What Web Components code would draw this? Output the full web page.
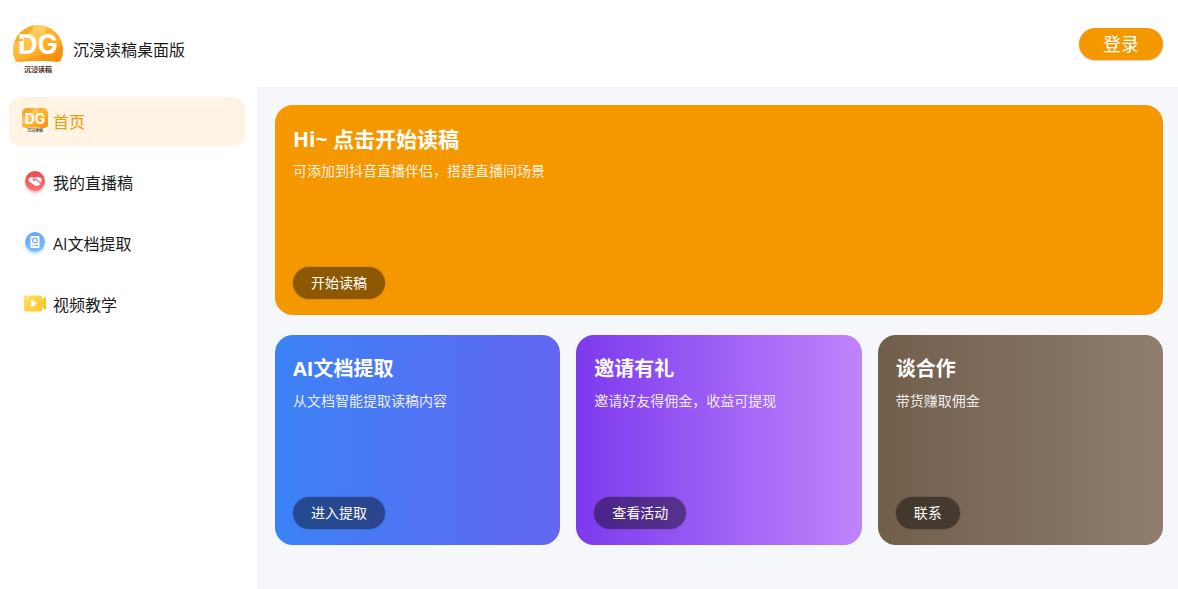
<!DOCTYPE html>
<html lang="zh-CN">
<head>
<meta charset="utf-8">
<meta name="viewport" content="width=device-width, initial-scale=1">
<title>沉浸读稿桌面版</title>
<style>
  body { margin: 0; background: #fff; color: #1a1a1a; font: 16px/24px "Open Sans", "Noto Sans CJK SC", sans-serif; }
</style>
</head>
<body>
<reader-app></reader-app>
<script>
const define = (name, html) => {
  const template = document.createElement('template');
  template.innerHTML = html;
  customElements.define(name, class extends HTMLElement {
    constructor() {
      super();
      this.attachShadow({ mode: 'open' }).append(template.content.cloneNode(true));
    }
  });
};

define('brand-logo', `
  <style>
    :host { display: block; width: 52px; height: 52px; }
    svg { display: block; width: 100%; height: 100%; }
    .mark { font: 700 27px Inter, sans-serif; }
    .name { font: 700 7px "Noto Sans CJK SC", sans-serif; }
  </style>
  <svg viewBox="0 0 52 52" role="img" aria-label="沉浸读稿">
    <defs>
      <linearGradient id="g" x1="0" y1="0" x2="1" y2="1">
        <stop offset="0" stop-color="#f9a01c"/><stop offset=".5" stop-color="#ffb62e"/><stop offset="1" stop-color="#fb8905"/>
      </linearGradient>
      <linearGradient id="s" x2="0" y2="1"><stop stop-color="#ffd879"/><stop offset="1" stop-color="#ffbb3a"/></linearGradient>
      <clipPath id="c"><circle cx="26" cy="26" r="25"/></clipPath>
    </defs>
    <g clip-path="url(#c)">
      <path fill="url(#g)" d="M0 0H52V34Q50 38 44 38Q26 36 8 38Q2 38 0 34Z"/>
      <path fill="url(#s)" opacity=".8" d="M36 0Q32 18 16 27Q8 31 0 32V20Q17 16 23 0Z"/>
      <path fill="#f8890a" opacity=".4" d="M0 36Q30 35 52 20V38H0Z"/>
      <path fill="#fff" d="M0 34Q2 38 8 38Q26 36 44 38Q50 38 52 34V52H0Z"/>
    </g>
    <text class="mark" x="26" y="30" text-anchor="middle" fill="#fff">DG</text>
    <path stroke="#ffb02c" stroke-width="2" d="M6 16h5"/>
    <path d="M3 38A25 25 0 0 0 49 38" fill="none" stroke="#f2b779" stroke-dasharray="1 2"/>
    <text class="name" x="26" y="48" text-anchor="middle" fill="#4e321d">沉浸读稿</text>
  </svg>`);

define('app-header', `
  <style>
    :host { display: flex; align-items: center; justify-content: space-between; height: 87px; padding: 0 15px 0 12px; box-sizing: border-box; }
    .brand { display: flex; align-items: center; gap: 9px; padding-top: 12px; }
    button { height: 32px; padding: 0 24px; border: 0; border-radius: 16px; background: #f59800; color: #fff; font: 18px/32px "Open Sans", "Noto Sans CJK SC", sans-serif; box-shadow: 0 1px 2px #0003; cursor: pointer; }
  </style>
  <div class="brand"><brand-logo></brand-logo><span><slot></slot></span></div>
  <button type="button">登录</button>`);

define('nav-item', `
  <style>
    :host { display: block; }
    a { display: flex; align-items: center; gap: 5px; height: 49px; padding: 0 13px; border-radius: 12px; color: inherit; text-decoration: none; }
    :host([active]) a { background: #fff3e4; color: #f59800; }
    ::slotted(svg) { width: 26px; height: 26px; flex: none; margin-bottom: 2px; }
  </style>
  <a href="#"><slot name="icon"></slot><span><slot></slot></span></a>`);

define('side-nav', `
  <style>
    :host { display: block; padding: 10px 12px 0 9px; }
    nav { display: grid; gap: 12px; }
    .mark { font: 700 14px Inter, sans-serif; }
    .name { font: 700 4px "Noto Sans CJK SC", sans-serif; }
  </style>
  <nav>
    <nav-item active>
      <svg slot="icon" viewBox="0 0 26 26" aria-hidden="true">
        <defs>
          <linearGradient id="h" x1="0" x2="1" y2="1"><stop stop-color="#f5a02b"/><stop offset=".5" stop-color="#ffb733"/><stop offset="1" stop-color="#fb8d0b"/></linearGradient>
          <clipPath id="r"><rect width="26" height="26" rx="5"/></clipPath>
        </defs>
        <g clip-path="url(#r)">
          <path fill="#fff" d="M0 0h26v26H0z"/>
          <path fill="url(#h)" d="M0 0h26v18Q25 20 22 20Q13 19 4 20Q1 20 0 18Z"/>
          <path fill="#ffd06a" opacity=".7" d="M17 0Q14 13 0 16V9Q10 8 12 0Z"/>
        </g>
        <text class="mark" x="13" y="16" fill="#fff" text-anchor="middle">DG</text>
        <text class="name" x="13" y="24" fill="#6b4a31" text-anchor="middle">沉浸读稿</text>
      </svg>首页
    </nav-item>
    <nav-item>
      <svg slot="icon" viewBox="0 0 26 26" aria-hidden="true">
        <defs><linearGradient id="red" x2="0" y2="1"><stop stop-color="#ef4650"/><stop offset="1" stop-color="#fa7470"/></linearGradient>
        <filter id="b" x="-30%" y="-30%" width="160%" height="160%"><feGaussianBlur stdDeviation="1.4"/></filter></defs>
        <circle cx="13" cy="15" r="9" fill="#f67678" opacity=".6" filter="url(#b)"/>
        <circle cx="13" cy="12" r="10" fill="url(#red)"/>
        <path fill="#fff" d="M6.500 9.500L9.500 8L12 8.500L10.500 11Q12 12.500 14 11L18.500 15L17 16.500L13.500 17L7 12.500Z"/>
        <path fill="#fff" d="M13 8.500L16.500 8L19.500 9.500V12.500L18.500 13.500L14.500 10L12 11Z"/>
        <path stroke="#ef5a60" stroke-width=".6" fill="none" d="M10.500 11Q12 13 14.200 10.500L18.500 14.200"/>
      </svg>我的直播稿
    </nav-item>
    <nav-item>
      <svg slot="icon" viewBox="0 0 26 26" aria-hidden="true">
        <defs><linearGradient id="blue" x2="0" y2="1"><stop stop-color="#65a9f7"/><stop offset="1" stop-color="#7cbdff"/></linearGradient>
        <filter id="b2" x="-30%" y="-30%" width="160%" height="160%"><feGaussianBlur stdDeviation="1.4"/></filter></defs>
        <circle cx="13" cy="15" r="9" fill="#85c2ff" opacity=".6" filter="url(#b2)"/>
        <circle cx="13" cy="12" r="10" fill="url(#blue)"/>
        <rect x="8.500" y="6" width="9" height="12" rx="1" fill="#fff"/>
        <circle cx="13" cy="10.500" r="2.300" fill="none" stroke="#70b0fa" stroke-width="1.200"/>
        <path d="M10 15.500h1M12.500 15.500h3.500" stroke="#70b0fa"/>
      </svg>AI文档提取
    </nav-item>
    <nav-item>
      <svg slot="icon" viewBox="0 0 26 26" aria-hidden="true">
        <defs><linearGradient id="yellow" x2="1" y2="1"><stop stop-color="#ffe45a"/><stop offset="1" stop-color="#ffc52e"/></linearGradient></defs>
        <path fill="#ffc833" d="M18 11L22 6.500Q24 5 24 7V18Q24 20 22 18L18 14Z"/>
        <rect x="2" y="4.500" width="18" height="16" rx="2" fill="url(#yellow)"/>
        <path fill="#fff" d="M9 9.500Q9 8.500 10 9L14.500 11.900Q15.300 12.500 14.500 13.100L10 16Q9 16.500 9 15.500Z"/>
        <path fill="none" stroke="#fff" d="M4 9V8Q4 6.500 5.500 6.500H7.500"/>
      </svg>视频教学
    </nav-item>
  </nav>`);

define('promo-card', `
  <style>
    :host { display: flex; flex-direction: column; align-items: flex-start; min-height: 210px; padding: 18px 18px 16px; box-sizing: border-box; border-radius: 18px; color: #fff; }
    h2 { margin: 0; font-size: var(--title-size, 20px); line-height: 32px; font-weight: 700; }
    p { margin: 6px 0 0; font-size: 14px; line-height: 20px; color: #ffffffe6; }
    button { height: 32px; margin-top: auto; padding: 0 18px; border: 0; border-radius: 16px; background: #0000006b; color: #fff; font: 14px/32px "Open Sans", "Noto Sans CJK SC", sans-serif; box-shadow: 0 0 2px #0004; cursor: pointer; }
  </style>
  <h2><slot name="title"></slot></h2>
  <p><slot></slot></p>
  <button type="button"><slot name="action"></slot></button>`);

define('reader-app', `
  <style>
    :host { display: grid; grid-template-columns: 257px minmax(0, 1fr); grid-template-rows: auto 1fr; min-height: 100vh; }
    app-header { grid-column: 1 / -1; }
    main { display: grid; grid-template-columns: repeat(3, minmax(0, 1fr)); gap: 20px 16px; align-content: start; padding: 18px 15px 44px 18px; background: #f5f7fb; }
    .hero { grid-column: 1 / -1; background: #f59800; --title-size: 21px; }
    .extract { background: linear-gradient(90deg, #3b82f6, #6366f1); }
    .invite { background: linear-gradient(90deg, #7c3aed, #c084fc); }
    .partner { background: linear-gradient(90deg, #715e4b, #8f7d6e); }
  </style>
  <app-header>沉浸读稿桌面版</app-header>
  <side-nav></side-nav>
  <main>
    <promo-card class="hero"><span slot="title">Hi~ 点击开始读稿</span>可添加到抖音直播伴侣，搭建直播间场景<span slot="action">开始读稿</span></promo-card>
    <promo-card class="extract"><span slot="title">AI文档提取</span>从文档智能提取读稿内容<span slot="action">进入提取</span></promo-card>
    <promo-card class="invite"><span slot="title">邀请有礼</span>邀请好友得佣金，收益可提现<span slot="action">查看活动</span></promo-card>
    <promo-card class="partner"><span slot="title">谈合作</span>带货赚取佣金<span slot="action">联系</span></promo-card>
  </main>`);
</script>
</body>
</html>
